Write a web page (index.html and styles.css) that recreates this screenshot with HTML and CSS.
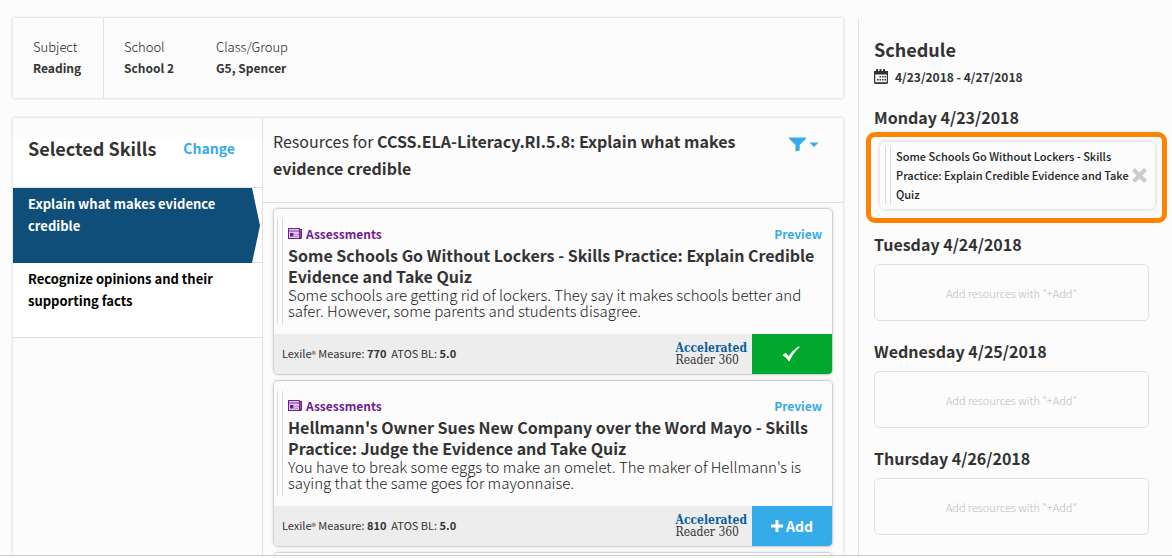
FILE: index.html
```html
<!DOCTYPE html>
<html lang="en">
<head>
<meta charset="utf-8">
<title>Schedule resources</title>
<link rel="stylesheet" href="styles.css">
</head>
<body>
<svg class="sprite" aria-hidden="true">
  <symbol id="i-news" viewBox="0 0 14 11">
    <path fill="#6e2090" d="M0 0h12v1h2v9l-1 1H0z"/>
    <path fill="#dcc8e4" d="M1 1h10v1.500H1zM1 3.500h10V10H1z"/>
    <path fill="#b48cc6" d="M1 2.500h10v1H1zM6.500 6H11v1H6.500zM6.500 8H10v1H6.500zM12 2h.5v7H12z"/>
    <path fill="#6e2090" d="M2 5h3.500v3.500H2z"/>
  </symbol>
  <symbol id="i-check" viewBox="0 0 18 16">
    <path fill="#fff" d="M.5 9.200 3.500 6.800Q5.600 8.600 6.700 10.300 10.800 3.800 17 .3L17.700 1Q11 7 7.300 15.700 4.500 11.500.5 9.200z"/>
  </symbol>
  <symbol id="i-plus" viewBox="0 0 12 12">
    <path fill="#fff" d="M4.500 0h3v4.500H12v3H7.500V12h-3V7.500H0v-3h4.500z"/>
  </symbol>
</svg>
<div class="page">
  <main class="main">
    <section class="context">
      <dl class="fact fact-first"><dt>Subject</dt><dd>Reading</dd></dl>
      <dl class="fact"><dt>School</dt><dd>School 2</dd></dl>
      <dl class="fact"><dt>Class/Group</dt><dd>G5, Spencer</dd></dl>
    </section>
    <section class="planner">
      <nav class="skills" aria-label="Selected skills">
        <header class="skills-head">
          <h2 class="skills-title">Selected Skills</h2>
          <a class="change" href="#change">Change</a>
        </header>
        <a class="skill skill-on" href="#skill1"><span class="skill-text">Explain what makes evidence credible</span></a>
        <a class="skill" href="#skill2"><span class="skill-text">Recognize opinions and their supporting facts</span></a>
      </nav>
      <div class="resources">
        <header class="res-head">
          <h2 class="res-title">Resources for <strong>CCSS.ELA-Literacy.RI.5.8: Explain what makes evidence credible</strong></h2>
          <button class="filter" type="button" aria-label="Filter">
            <svg width="30" height="15" viewBox="0 0 30 15"><path fill="#36abe9" d="M0 0.500h17v1L10.700 8v5.500L6.500 14.500V8L0 1.500zM20.500 5.500h9L25 10z"/></svg>
          </button>
        </header>
        <div class="list">
          <article class="card">
            <div class="card-body">
              <div class="grip"></div>
              <div class="card-text">
                <div class="card-top">
                  <span class="kind"><svg class="news"><use href="#i-news"/></svg>Assessments</span>
                  <a class="preview" href="#preview1">Preview</a>
                </div>
                <h3 class="card-title">Some Schools Go Without Lockers - Skills Practice: Explain Credible Evidence and Take Quiz</h3>
                <p class="desc">Some schools are getting rid of lockers. They say it makes schools better and safer. However, some parents and students disagree.</p>
              </div>
            </div>
            <footer class="card-foot">
              <p class="levels">Lexile<span class="reg">®</span> Measure: <b>770</b>&nbsp; ATOS BL: <b>5.0</b></p>
              <div class="brand"><b class="brand-top">Accelerated</b><span>Reader 360</span></div>
              <button class="action added" type="button" aria-label="Added"><svg class="check"><use href="#i-check"/></svg></button>
            </footer>
          </article>
          <article class="card">
            <div class="card-body">
              <div class="grip"></div>
              <div class="card-text">
                <div class="card-top">
                  <span class="kind"><svg class="news"><use href="#i-news"/></svg>Assessments</span>
                  <a class="preview" href="#preview2">Preview</a>
                </div>
                <h3 class="card-title">Hellmann's Owner Sues New Company over the Word Mayo - Skills Practice: Judge the Evidence and Take Quiz</h3>
                <p class="desc">You have to break some eggs to make an omelet. The maker of Hellmann's is saying that the same goes for mayonnaise.</p>
              </div>
            </div>
            <footer class="card-foot">
              <p class="levels">Lexile<span class="reg">®</span> Measure: <b>810</b>&nbsp; ATOS BL: <b>5.0</b></p>
              <div class="brand"><b class="brand-top">Accelerated</b><span>Reader 360</span></div>
              <button class="action" type="button"><svg class="plus"><use href="#i-plus"/></svg>Add</button>
            </footer>
          </article>
          <article class="card"><div class="card-body"></div></article>
        </div>
      </div>
    </section>
  </main>
  <aside class="schedule">
    <h2 class="sched-title">Schedule</h2>
    <p class="range">
      <svg width="14" height="15" viewBox="0 0 14 15"><path fill="#333" fill-rule="evenodd" d="M0 2h2V0h2v2h1.500V0h2v2H9V0h2v2h3v12l-1 1H1l-1-1zM1.200 5.500v7.800h11.600V5.500z"/><path fill="#333" d="M5.500 7H7v1.500H5.500zM8 7h1.500v1.500H8zM10.500 7H12v1.500h-1.500zM3 10h1.500v1.500H3zM5.500 10H7v1.500H5.500zM8 10h1.500v1.500H8zM10.500 10H12v1.500h-1.500z"/></svg>
      4/23/2018 - 4/27/2018
    </p>
    <section class="day">
      <h3 class="day-title">Monday 4/23/2018</h3>
      <div class="planned">
        <div class="item">
          <div class="grip"></div>
          <p class="item-text">Some Schools Go Without Lockers - Skills Practice: Explain Credible Evidence and Take Quiz</p>
          <button class="remove" type="button" aria-label="Remove"><svg width="15" height="15" viewBox="0 0 15 15"><path stroke="#ccc" stroke-width="4" d="M1.500 1.500l12 12M13.500 1.500l-12 12"/></svg></button>
        </div>
        <div class="highlight"></div>
      </div>
    </section>
    <section class="day"><h3 class="day-title">Tuesday 4/24/2018</h3><div class="empty">Add resources with "+Add"</div></section>
    <section class="day"><h3 class="day-title">Wednesday 4/25/2018</h3><div class="empty">Add resources with "+Add"</div></section>
    <section class="day"><h3 class="day-title">Thursday 4/26/2018</h3><div class="empty">Add resources with "+Add"</div></section>
  </aside>
</div>
</body>
</html>
```
FILE: styles.css
```css
* { box-sizing: border-box; }
html { height: 100%; }
body {
  height: 100%;
  margin: 0;
  padding-bottom: 2px;
  background: #fcfcfc;
  color: #333;
  font-family: "Noto Sans CJK SC", "Noto Sans", sans-serif;
  font-size: 12px;
}
h2, h3, p, dl, dd { margin: 0; }
a { text-decoration: none; color: #36abe9; }
button { border: 0; padding: 0; background: none; font: inherit; cursor: pointer; }
svg { display: block; flex: none; }
.sprite { position: absolute; width: 0; height: 0; }

.page {
  display: flex;
  gap: 15px;
  height: 100%;
  padding: 18px 0 0 13px;
  border-bottom: 1px solid #ccc;
  overflow: hidden;
}
.main { flex: 1; min-width: 0; display: flex; flex-direction: column; gap: 20px; }

.context { display: flex; flex: none; box-shadow: 0 0 3px rgba(0, 0, 0, .2); }
.fact { min-width: 92px; padding: 18px 20px 20px; line-height: 21px; }
.fact dt { color: #222; font-size: 13px; font-weight: 300; }
.fact dd { font-weight: 700; }
.fact-first { min-width: 91px; border-right: 1px solid #e1e1e1; }

.planner { display: flex; flex: 1; min-height: 0; box-shadow: 0 0 3px rgba(0, 0, 0, .2); }
.skills { flex: none; width: 250px; border-right: 1px solid #e1e1e1; }
.skills-head {
  display: flex;
  align-items: center;
  gap: 27px;
  height: 70px;
  padding: 0 15px 10px;
  background: linear-gradient(#fcfcfc 20px, #fff 20px);
  border-bottom: 1px solid #e1e1e1;
}
.skills-title { font-size: 18px; line-height: 24px; }
.change { font-size: 14px; line-height: 24px; font-weight: 700; }
.skill {
  display: block;
  background: #fff;
  border-bottom: 1px solid #e1e1e1;
  color: #000;
  font-size: 13px;
  font-weight: 700;
  line-height: 22px;
}
.skill-text { display: block; min-height: 74px; padding: 5px 30px 0 15px; }
.skill-on { color: #fff; }
.skill-on .skill-text {
  margin: 0 2px -1px 0;
  min-height: 75px;
  background: #0f4e79;
  clip-path: polygon(0 0, calc(100% - 8px) 0, 100% 50%, calc(100% - 8px) 100%, 0 100%);
}

.resources { flex: 1; min-width: 0; overflow: hidden; }
.res-head {
  display: flex;
  justify-content: space-between;
  align-items: flex-start;
  gap: 20px;
  height: 85px;
  padding: 10px 24px 0 10px;
  border-bottom: 1px solid #e1e1e1;
}
.res-title { font-size: 16px; line-height: 27px; font-weight: 400; }
.filter { padding-top: 9px; }
.list { display: flex; flex-direction: column; gap: 5px; padding: 5px 10px; }
.card {
  border: 1px solid #d2d2d2;
  border-radius: 5px;
  overflow: hidden;
  box-shadow: 0 0 3px rgba(0, 0, 0, .15);
}
.card-body { display: flex; gap: 5px; min-height: 125px; padding: 10px 10px 10px 3px; }
.grip { flex: none; width: 6px; border: 1px solid #d8d8d8; border-width: 0 1px; }
.card-text { flex: 1; min-width: 0; height: 105px; padding-top: 4px; }
.card-top {
  display: flex;
  justify-content: space-between;
  align-items: flex-start;
  height: 22px;
  line-height: 21px;
  font-weight: 700;
}
.kind { display: flex; align-items: center; gap: 4px; color: #6e2090; }
.news { width: 14px; height: 11px; }
.card-title { font-size: 16px; line-height: 21px; }
.desc { color: #222; font-size: 15px; font-weight: 300; line-height: 16px; }
.card-foot { display: flex; align-items: center; height: 40px; background: #ededed; }
.levels { flex: 1; padding-left: 8px; font-size: 11px; line-height: 16px; }
.reg { font-size: 9px; }
.brand {
  display: grid;
  padding-right: 5px;
  font-family: "DejaVu Serif Condensed", "DejaVu Serif", serif;
  font-size: 12px;
  line-height: 12px;
}
.brand-top { color: #0a609c; }
.action {
  display: flex;
  align-items: center;
  justify-content: center;
  gap: 3px;
  width: 80px;
  height: 100%;
  background: #36abe9;
  color: #fff;
  font-size: 14px;
  font-weight: 700;
}
.added { padding-right: 3px; background: #00a82d; }
.check { width: 18px; height: 16px; }
.plus { width: 12px; height: 12px; }

.schedule { flex: none; width: 314px; padding: 18px 23px 0 15px; border-left: 1px solid #e1e1e1; }
.sched-title { font-size: 18px; line-height: 26px; }
.range { display: flex; align-items: center; gap: 7px; height: 28px; font-weight: 700; }
.day { padding-top: 15px; }
.day + .day { padding-top: 18px; }
.day-title { margin-bottom: 7px; font-size: 16px; line-height: 25px; }
.planned { position: relative; padding: 5px 0; }
.item {
  display: flex;
  align-items: center;
  margin: 0 -6px 0 6px;
  padding: 5px 8px 5px 5px;
  border-radius: 5px;
  box-shadow: 0 0 4px rgba(0, 0, 0, .2);
}
.item .grip { align-self: stretch; }
.item-text { flex: 1; padding-left: 5px; color: #222; font-size: 11px; line-height: 19px; font-weight: 500; }
.highlight {
  position: absolute;
  inset: -5px -18px -9px -8px;
  border: 5px solid #ff8300;
  border-radius: 9px;
  pointer-events: none;
}
.empty {
  display: grid;
  place-items: center;
  height: 57px;
  border: 1px solid #e1e1e1;
  border-radius: 5px;
  color: #bbb;
  font-size: 11px;
  font-weight: 300;
}
```
